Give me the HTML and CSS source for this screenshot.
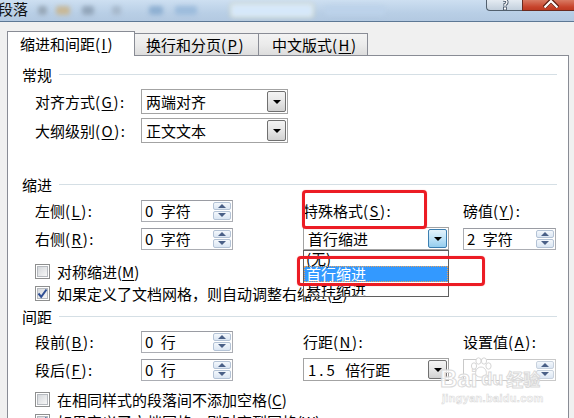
FILE: index.html
```html
<!DOCTYPE html>
<html lang="zh-CN">
<head>
<meta charset="utf-8">
<title>段落</title>
<link rel="stylesheet" href="styles.css">
</head>
<body>
<div class="titlebar">
  <span class="title">段落</span>
  <div class="blobs">
    <i class="blob b1"></i><i class="blob b2"></i><i class="blob b3"></i><i class="blob b4"></i><i class="blob b5"></i><i class="blob b6"></i><i class="blob b7"></i><i class="blob b8"></i>
  </div>
  <div class="caption-btns">
    <div class="help"><svg width="10" height="10" viewBox="0 0 10 10"><path d="M3 0 Q7 0 7 2 Q7 4 5 4.5 V6" fill="none" stroke="#3b4a5c" stroke-width="3"/><path d="M3 0 Q7 0 7 2 Q7 4 5 4.5 V6" fill="none" stroke="#fff" stroke-width="1.4"/><rect x="3.5" y="7" width="3" height="3" fill="#fff" stroke="#3b4a5c" stroke-width="0.8"/></svg></div>
    <div class="close"><svg width="16" height="8" viewBox="0 0 16 8"><polyline points="1,7.5 8,0.5 15,7.5" fill="none" stroke="#5a1d12" stroke-width="4"/><polyline points="1.5,7.5 8,1 14.5,7.5" fill="none" stroke="#fff" stroke-width="2.2"/></svg></div>
  </div>
</div>

<div class="dialog">
  <div class="tabs">
    <div class="tab active">缩进和间距<span class="k">(<u>I</u>)</span></div>
    <div class="tab t2">换行和分页<span class="k">(<u>P</u>)</span></div>
    <div class="tab t3">中文版式<span class="k">(<u>H</u>)</span></div>
  </div>
  <div class="panel">
    <div class="sec-head"><span>常规</span><i class="rule"></i></div>
    <div class="grid general">
      <span class="lbl">对齐方式<span class="k">(<u>G</u>):</span></span>
      <div class="combo wide"><span class="val">两端对齐</span><b class="dd"></b></div>
      <span></span><span></span>
      <span class="lbl">大纲级别<span class="k">(<u>O</u>):</span></span>
      <div class="combo wide"><span class="val">正文文本</span><b class="dd"></b></div>
      <span></span><span></span>
    </div>

    <div class="sec-head indent-head"><span>缩进</span><i class="rule"></i></div>
    <div class="grid rows23 indent-grid">
      <span class="lbl">左侧<span class="k">(<u>L</u>):</span></span>
      <div class="spin"><span class="val">0 字符</span><span class="arrows"><i class="up"></i><i class="down"></i></span></div>
      <span class="lbl">特殊格式<span class="k">(<u>S</u>):</span></span>
      <span class="lbl">磅值<span class="k">(<u>Y</u>):</span></span>
      <span class="lbl">右侧<span class="k">(<u>R</u>):</span></span>
      <div class="spin"><span class="val">0 字符</span><span class="arrows"><i class="up"></i><i class="down"></i></span></div>
      <div class="combo narrow"><span class="val">首行缩进</span><b class="dd hot"></b></div>
      <div class="spin right"><span class="val">2 字符</span><span class="arrows"><i class="up"></i><i class="down"></i></span></div>
    </div>

    <div class="checks first-checks">
      <div class="check"><span class="cb"></span><span>对称缩进(<u>M</u>)</span></div>
      <div class="check"><span class="cb checked"><svg width="11" height="11" viewBox="0 0 11 11"><path d="M1.5 5.5 L4.2 8.8 L9.5 1.5" fill="none" stroke="#2f4f94" stroke-width="2"/></svg></span><span>如果定义了文档网格，则自动调整右缩进(<u>D</u>)</span></div>
    </div>

    <div class="sec-head spacing-head"><span>间距</span><i class="rule"></i></div>
    <div class="grid rows23 spacing-grid">
      <span class="lbl">段前<span class="k">(<u>B</u>):</span></span>
      <div class="spin"><span class="val">0 行</span><span class="arrows"><i class="up"></i><i class="down"></i></span></div>
      <span class="lbl">行距<span class="k">(<u>N</u>):</span></span>
      <span class="lbl">设置值<span class="k">(<u>A</u>):</span></span>
      <span class="lbl">段后<span class="k">(<u>F</u>):</span></span>
      <div class="spin"><span class="val">0 行</span><span class="arrows"><i class="up"></i><i class="down"></i></span></div>
      <div class="combo narrow"><span class="val"><span class="num">1.5</span> 倍行距</span><b class="dd"></b></div>
      <div class="spin right disabled"><span class="val"></span><span class="arrows"><i class="up"></i><i class="down"></i></span></div>
    </div>

    <div class="checks last-checks">
      <div class="check"><span class="cb"></span><span>在相同样式的段落间不添加空格(<u>C</u>)</span></div>
      <div class="check"><span class="cb checked"><svg width="11" height="11" viewBox="0 0 11 11"><path d="M1.5 5.5 L4.2 8.8 L9.5 1.5" fill="none" stroke="#2f4f94" stroke-width="2"/></svg></span><span>如果定义了文档网格，则对齐到网格(<u>W</u>)</span></div>
    </div>
  </div>
</div>

<div class="droplist">
  <div class="item">(无)</div>
  <div class="item sel">首行缩进</div>
  <div class="item">悬挂缩进</div>
</div>

<div class="mark m1"></div>
<div class="mark m2"></div>

<div class="watermark">
  <div class="wm-top">
    <span class="wm-bai">Bai</span>
    <svg class="paw" width="24" height="22" viewBox="0 0 24 22"><g fill="#fff" stroke="#d6d6d6" stroke-width="1"><ellipse cx="5" cy="9" rx="2.6" ry="3.2"/><ellipse cx="9.5" cy="4" rx="2.6" ry="3.2"/><ellipse cx="15" cy="4" rx="2.6" ry="3.2"/><ellipse cx="19.5" cy="9" rx="2.6" ry="3.2"/><path d="M12 10 C7 10 5 17 8 19 C10 20.5 14 20.5 16 19 C19 17 17 10 12 10 Z"/></g></svg>
    <span class="wm-du">du</span>
    <span class="wm-jy">经验</span>
  </div>
  <div class="wm-url">jingyan.baidu.com</div>
</div>
</body>
</html>
```

FILE: styles.css
```css
html, body {
  margin: 0;
  padding: 0;
}
body {
  width: 574px;
  height: 418px;
  overflow: hidden;
  position: relative;
  background: #f0f0f0;
  font-family: "Noto Sans CJK SC", "Noto Sans", sans-serif;
  font-size: 15px;
  color: #000;
}
u {
  text-decoration: underline;
  text-underline-offset: 2px;
  text-decoration-thickness: 1px;
}
.k {
  letter-spacing: 1.5px;
}

/* ---------- title bar ---------- */
.titlebar {
  height: 21px;
  border-bottom: 1px solid #5d7895;
  background: linear-gradient(#cddff1, #b9cfe6 60%, #b3c9e1);
  display: flex;
  align-items: flex-start;
  overflow: hidden;
}
.title {
  font-size: 15px;
  line-height: 17px;
  margin-left: -2px;
  color: #111;
}
.blobs {
  display: flex;
  align-items: center;
  height: 20px;
  margin-left: 10px;
}
.blob {
  display: block;
  height: 9px;
  border-radius: 3px;
  filter: blur(2px);
}
.b1 { width: 9px; background: #98a8b8; }
.b2 { width: 14px; margin-left: 9px; background: #c8b898; }
.b3 { width: 12px; margin-left: 12px; background: #93a6ba; }
.b4 { width: 9px; margin-left: 18px; background: #a7b9cc; }
.b5 { width: 14px; margin-left: 28px; background: #8fb0d2; }
.b6 { width: 22px; margin-left: 12px; background: #9dbcdc; }
.b7 { width: 82px; height: 13px; margin-left: 34px; background: #d6e8fa; box-shadow: 0 0 0 1px #dcd9b8; }
.b8 { width: 60px; margin-left: 12px; background: #bcd2ea; }
.caption-btns {
  margin-left: auto;
  display: flex;
  height: 11px;
}
.help {
  width: 36px;
  box-sizing: border-box;
  border-left: 1px solid #52606e;
  border-bottom: 1px solid #52606e;
  border-bottom-left-radius: 4px;
  background: linear-gradient(#e4ebf2, #c2cfdc);
  display: flex;
  justify-content: center;
  align-items: flex-start;
}
.close {
  width: 52px;
  box-sizing: border-box;
  border-left: 1px solid #6b2a1e;
  border-bottom: 1px solid #6b2a1e;
  background: linear-gradient(#d97a63, #c7432b 70%, #bd3a22);
  display: flex;
  justify-content: center;
  align-items: flex-start;
  padding-left: 4px;
}

/* ---------- dialog ---------- */
.dialog {
  padding: 9px 5px 0 7px;
}
.tabs {
  display: flex;
  align-items: flex-end;
  height: 24px;
}
.tab {
  box-sizing: border-box;
  height: 22px;
  border: 1px solid #898c95;
  border-bottom: none;
  background: linear-gradient(#f3f3f3, #ebebeb 50%, #dddddd);
  line-height: 22px;
  white-space: nowrap;
  position: relative;
}
.tab.active {
  width: 128px;
  height: 25px;
  margin-bottom: -1px;
  background: #fff;
  z-index: 2;
  padding-left: 12px;
  line-height: 24px;
}
.tab.t2 {
  width: 125px;
  margin-left: -1px;
  padding-left: 11px;
}
.tab.t3 {
  width: 110px;
  margin-left: -1px;
  padding-left: 13px;
}
.panel {
  height: 380px;
  border: 1px solid #898c95;
  background: #fff;
  padding: 8px 11px 0 14px;
  box-sizing: border-box;
  position: relative;
  z-index: 1;
}

.sec-head {
  display: flex;
  align-items: center;
  height: 20px;
  gap: 7px;
  white-space: nowrap;
}
.rule {
  flex: 1;
  height: 1px;
  background: #d5dfe5;
}
.indent-head { margin-top: 31px; }
.spacing-head { margin-top: 2px; }

.grid {
  display: grid;
  grid-template-columns: 106px 162px 160px 94px;
  align-items: center;
  padding-left: 13px;
}
.general {
  margin-top: 5px;
  grid-auto-rows: 25px;
  row-gap: 4px;
}
.rows23 {
  grid-auto-rows: 23px;
  row-gap: 5px;
}
.indent-grid { margin-top: 5px; }
.spacing-grid { margin-top: 4px; }
.lbl {
  white-space: nowrap;
  line-height: 20px;
}

/* combo box */
.combo {
  box-sizing: border-box;
  border: 1px solid #a3a3a3;
  background: #fff;
  display: flex;
  align-items: stretch;
}
.combo.wide { width: 147px; height: 25px; }
.combo.narrow { width: 146px; height: 23px; }
.combo .val {
  flex: 1;
  padding-left: 4px;
  line-height: 21px;
  white-space: nowrap;
  word-spacing: 4px;
}
.combo.wide .val { line-height: 23px; }
.num {
  letter-spacing: 3px;
}
.dd {
  width: 19px;
  margin: 1px;
  box-sizing: border-box;
  border: 1px solid #707070;
  border-radius: 2px;
  background: linear-gradient(#f4f4f4, #e6e6e6 50%, #d1d1d1);
  display: flex;
  align-items: center;
  justify-content: center;
}
.dd::after {
  content: "";
  border-left: 4px solid transparent;
  border-right: 4px solid transparent;
  border-top: 4px solid #000;
}
.dd.hot {
  border-color: #3c7fb1;
  background: linear-gradient(#e4f3fc, #bfe3f8 50%, #95cdee);
}

/* spin box */
.spin {
  width: 92px;
  height: 22px;
  box-sizing: border-box;
  border: 1px solid #abadb3;
  border-top-color: #9a9ca3;
  background: #fff;
  display: flex;
}
.spin.right { width: 93px; }
.spin .val {
  flex: 1;
  padding-left: 3px;
  line-height: 20px;
  white-space: nowrap;
  word-spacing: 4px;
}
.arrows {
  width: 18px;
  margin: 1px 1px 1px 0;
  display: flex;
  flex-direction: column;
  gap: 1px;
}
.arrows i {
  flex: 1;
  box-sizing: border-box;
  border: 1px solid #b4c3d6;
  border-radius: 2px;
  background: linear-gradient(#f4f8fc, #dbe6f3);
  display: flex;
  align-items: center;
  justify-content: center;
}
.arrows .up::after {
  content: "";
  border-left: 4px solid transparent;
  border-right: 4px solid transparent;
  border-bottom: 4px solid #4a6087;
}
.arrows .down::after {
  content: "";
  border-left: 4px solid transparent;
  border-right: 4px solid transparent;
  border-top: 4px solid #4a6087;
}
.spin.disabled {
  border-color: #c9c9c9;
}
.spin.disabled .arrows i {
  border-color: #c8d2de;
}

/* checkboxes */
.checks {
  padding-left: 13px;
}
.first-checks { margin-top: 10px; }
.last-checks { margin-top: 7px; }
.check {
  display: flex;
  align-items: center;
  height: 22px;
  white-space: nowrap;
}
.cb {
  width: 15px;
  height: 15px;
  box-sizing: border-box;
  border: 1px solid #8e8f8f;
  padding: 1px;
  background: #fff;
  margin-right: 7px;
  position: relative;
  flex: none;
}
.cb::before {
  content: "";
  display: block;
  width: 100%;
  height: 100%;
  box-sizing: border-box;
  border: 1px solid #b6babf;
  background: linear-gradient(135deg, #d4d7db, #f7f7f7);
}
.cb svg {
  position: absolute;
  left: 1px;
  top: 1px;
}

/* dropdown list (open) */
.droplist {
  position: absolute;
  left: 303px;
  top: 250px;
  width: 146px;
  height: 47px;
  box-sizing: border-box;
  border: 1px solid #5f5f5f;
  background: #fff;
  z-index: 5;
  overflow: hidden;
}
.item {
  height: 15px;
  line-height: 15px;
  padding-left: 2px;
  white-space: nowrap;
}
.item.sel {
  height: 16px;
  line-height: 16px;
  background: #3399ff;
  color: #fff;
  outline: 1px dotted #e9a15b;
  outline-offset: -1px;
}

/* red annotation marks */
.mark {
  position: absolute;
  box-sizing: border-box;
  border: 3px solid #ec1c24;
  border-radius: 4px;
  z-index: 6;
  box-shadow: 0 0 1px rgba(236, 28, 36, 0.6);
}
.m1 { left: 302px; top: 190px; width: 125px; height: 39px; }
.m2 { left: 297px; top: 256px; width: 188px; height: 30px; }

/* watermark */
.watermark {
  position: absolute;
  left: 440px;
  top: 357px;
  z-index: 7;
  pointer-events: none;
}
.wm-top {
  display: flex;
  align-items: flex-end;
  height: 32px;
}
.wm-bai, .wm-du, .wm-jy {
  color: rgba(255, 255, 255, 0.85);
  -webkit-text-stroke: 1px #dadada;
  font-family: "Liberation Sans", "Noto Sans CJK SC", sans-serif;
  font-weight: bold;
  line-height: 20px;
}
.wm-bai { font-size: 24px; }
.paw { margin-left: -8px; margin-bottom: 10px; }
.wm-du { font-size: 18px; margin-left: -12px; }
.wm-jy { font-size: 17px; margin-left: 3px; font-family: "Noto Sans CJK SC", sans-serif; }
.wm-url {
  margin-top: 3px;
  margin-left: 2px;
  font-family: "Liberation Sans", sans-serif;
  font-size: 11px;
  line-height: 12px;
  font-weight: bold;
  color: rgba(255, 255, 255, 0.85);
  -webkit-text-stroke: 0.6px #dadada;
  letter-spacing: 0.3px;
}
```
